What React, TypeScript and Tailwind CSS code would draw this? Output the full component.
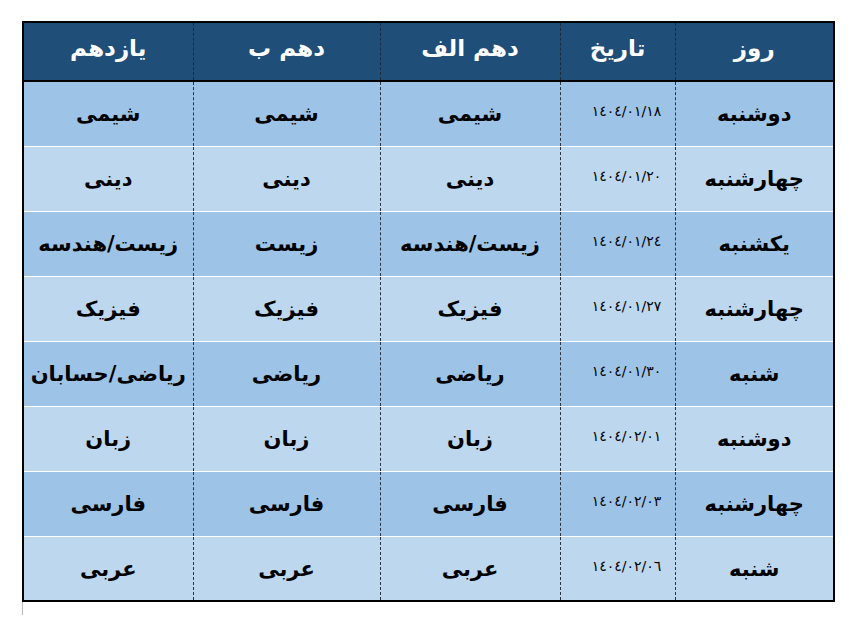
import React from "react";

const rows = [
  ["دوشنبه", "١٤٠٤/٠١/١٨", "شیمی", "شیمی", "شیمی"],
  ["چهارشنبه", "١٤٠٤/٠١/٢٠", "دینی", "دینی", "دینی"],
  ["یکشنبه", "١٤٠٤/٠١/٢٤", "زیست/هندسه", "زیست", "زیست/هندسه"],
  ["چهارشنبه", "١٤٠٤/٠١/٢٧", "فیزیک", "فیزیک", "فیزیک"],
  ["شنبه", "١٤٠٤/٠١/٣٠", "ریاضی", "ریاضی", "ریاضی/حسابان"],
  ["دوشنبه", "١٤٠٤/٠٢/٠١", "زبان", "زبان", "زبان"],
  ["چهارشنبه", "١٤٠٤/٠٢/٠٣", "فارسی", "فارسی", "فارسی"],
  ["شنبه", "١٤٠٤/٠٢/٠٦", "عربی", "عربی", "عربی"],
];

const headers = ["روز", "تاریخ", "دهم الف", "دهم ب", "یازدهم"];
const widths = ["w-[159px]", "w-[115px]", "w-[180px]", "w-[187px]", "w-[170px]"];

export default function App() {
  return (
    <div className="min-h-[623px] w-[866px] bg-white pt-[21px] pl-[22px]" style={{ fontFamily: '"DejaVu Sans", sans-serif' }}>
      <table dir="rtl" className="w-[811px] table-fixed border-collapse border-2 border-black">
        <colgroup>
          {widths.map((w, i) => (
            <col key={i} className={w} />
          ))}
        </colgroup>
        <thead>
          <tr className="h-[59px] bg-[#1f4e79] border-b-2 border-black">
            {headers.map((h, i) => (
              <th
                key={i}
                className={`text-[23px] font-bold text-white text-center align-middle pb-[6px] ${i < 4 ? "border-l border-dashed border-l-[#1a2a3a]" : ""}`}
              >
                {h}
              </th>
            ))}
          </tr>
        </thead>
        <tbody>
          {rows.map((r, ri) => (
            <tr key={ri} className={`h-[65px] ${ri % 2 === 0 ? "bg-[#9dc3e6]" : "bg-[#bdd7ee]"} ${ri > 0 ? "border-t border-white" : ""}`}>
              {r.map((c, ci) => (
                <td
                  key={ci}
                  className={`text-center align-middle text-black whitespace-nowrap ${ci < 4 ? "border-l border-dashed border-l-[#2a3440]" : ""} ${ci === 1 ? "text-[14px] font-normal tracking-[0.6px] pb-[4px] pl-[18px]" : "text-[21px] font-bold pt-[2px]"}`}
                >
                  {c}
                </td>
              ))}
            </tr>
          ))}
        </tbody>
      </table>
      <div className="w-px h-[13px] bg-[#bbbbbb]" />
    </div>
  );
}
